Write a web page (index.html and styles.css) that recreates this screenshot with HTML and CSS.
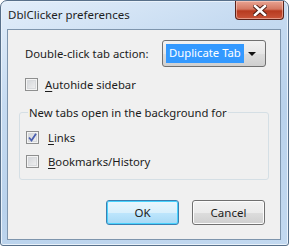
FILE: index.html
```html
<!DOCTYPE html>
<html lang="en">
<head>
    <meta charset="UTF-8">
    <title>DblClicker preferences</title>
    <link rel="stylesheet" href="styles.css">
</head>
<body>
    <div class="window">
        <div class="titlebar">
            <span class="title">DblClicker preferences</span>
            <div class="close-btn">
                <svg width="14" height="11" viewBox="0 0 14 11">
                    <path d="M2 1 L12 10 M12 1 L2 10" stroke="#4a1a12" stroke-width="4.4" stroke-linecap="square"/>
                    <path d="M2 1 L12 10 M12 1 L2 10" stroke="#ffffff" stroke-width="2.6" stroke-linecap="square"/>
                </svg>
            </div>
        </div>

        <div class="panel">
            <div class="action-row">
                <label>Double-click tab action:</label>
                <div class="select">
                    <span class="select-value">Duplicate Tab</span>
                    <span class="select-arrow"></span>
                </div>
            </div>

            <label class="check-row">
                <span class="checkbox"></span>
                <span><u>A</u>utohide sidebar</span>
            </label>

            <fieldset class="group">
                <legend>New tabs open in the background for</legend>
                <label class="check-row">
                    <span class="checkbox checked">
                        <svg width="9" height="9" viewBox="0 0 9 9">
                            <path d="M1 4.5 L3.5 7.5 L8 0.8" fill="none" stroke="#4a5fb0" stroke-width="1.8"/>
                        </svg>
                    </span>
                    <span><u>L</u>inks</span>
                </label>
                <label class="check-row">
                    <span class="checkbox"></span>
                    <span><u>B</u>ookmarks/History</span>
                </label>
            </fieldset>

            <div class="buttons">
                <button class="btn default">OK</button>
                <button class="btn">Cancel</button>
            </div>
        </div>
    </div>
</body>
</html>
```

FILE: styles.css
```css
body {
    margin: 0;
    font-family: "Noto Sans", "DejaVu Sans", sans-serif;
    font-size: 11.3px;
    color: #1c1c1c;
}

.window {
    width: 289px;
    height: 246px;
    box-sizing: border-box;
    border: 1px solid #58708a;
    border-radius: 7px 7px 3px 3px;
    padding: 0 7px 5px 6px;
    display: flex;
    flex-direction: column;
    background: linear-gradient(160deg, #e3eefa 0%, #c6dbf1 30%, #b9d2ec 60%, #c3d9f0 100%);
    box-shadow: inset 0 0 0 1px #e9f2fb;
}

/* Title bar */
.titlebar {
    height: 28px;
    display: flex;
    justify-content: space-between;
    align-items: flex-start;
    flex-shrink: 0;
}

.title {
    margin: 6px 0 0 1px;
    font-size: 11.5px;
    color: #1e1e1e;
}

.close-btn {
    width: 47px;
    height: 18px;
    margin-right: -3px;
    border: 1px solid #5a2219;
    border-top: none;
    border-radius: 0 0 4px 4px;
    background: linear-gradient(#e8a493 0%, #d47761 45%, #b73a1f 55%, #c9553a 100%);
    box-shadow: inset 0 0 0 1px rgba(255, 220, 210, 0.5);
    display: flex;
    align-items: center;
    justify-content: center;
}

/* Content panel */
.panel {
    flex: 1;
    background: #f0f0f0;
    border: 1px solid #7e95ad;
    padding: 10px 14px 14px 17px;
    display: flex;
    flex-direction: column;
}

.action-row {
    display: flex;
    align-items: center;
    justify-content: space-between;
    height: 27px;
}

.select {
    width: 104px;
    height: 27px;
    box-sizing: border-box;
    border: 1px solid #707070;
    border-radius: 3px;
    background: linear-gradient(#f2f2f2, #e6e6e6 50%, #dddddd 51%, #cfcfcf);
    display: flex;
    align-items: center;
    padding: 0 3px;
    white-space: nowrap;
}

.select-value {
    background: #3399ff;
    color: #ffffff;
    padding: 1px 3px 2px 3px;
    line-height: 16px;
}

.select-arrow {
    margin-left: auto;
    margin-right: 6px;
    width: 0;
    height: 0;
    border-left: 4px solid transparent;
    border-right: 4px solid transparent;
    border-top: 4px solid #111111;
}

.check-row {
    display: flex;
    align-items: center;
    gap: 7px;
    height: 18px;
    margin-top: 8px;
}

.checkbox {
    width: 13px;
    height: 13px;
    box-sizing: border-box;
    border: 1px solid #8e8f8f;
    background: linear-gradient(135deg, #cfd2d6, #f4f4f4);
    box-shadow: inset 0 0 0 1px #f4f4f4, inset 0 0 0 2px #d8dadd;
    display: flex;
    align-items: center;
    justify-content: center;
}

u {
    text-decoration-thickness: 1px;
    text-underline-offset: 2px;
}

/* Group box */
.group {
    margin: 12px 0 0 -6px;
    width: 250px;
    box-sizing: border-box;
    border: 1px solid #d5dfe5;
    border-radius: 3px;
    padding: 2px 0 9px 6px;
}

.group legend {
    padding: 0 1px;
    margin-left: 2px;
}

.group .check-row {
    margin-top: 6px;
    gap: 9px;
}

/* Buttons */
.buttons {
    display: flex;
    justify-content: flex-end;
    gap: 13px;
    margin-top: auto;
    padding-right: 1px;
}

.btn {
    width: 73px;
    height: 25px;
    font-family: inherit;
    font-size: 11.5px;
    color: #1c1c1c;
    border: 1px solid #707070;
    border-radius: 3px;
    background: linear-gradient(#f2f2f2, #ebebeb 50%, #dddddd 51%, #cfcfcf);
    box-shadow: inset 0 0 0 1px #fcfcfc;
}

.btn.default {
    border-color: #3c7fb1;
    box-shadow: inset 0 0 0 1px #48d2fd;
    background: linear-gradient(#eaf6fd, #d9f0fc 50%, #bee6fd 51%, #a7d9f5);
}
```
